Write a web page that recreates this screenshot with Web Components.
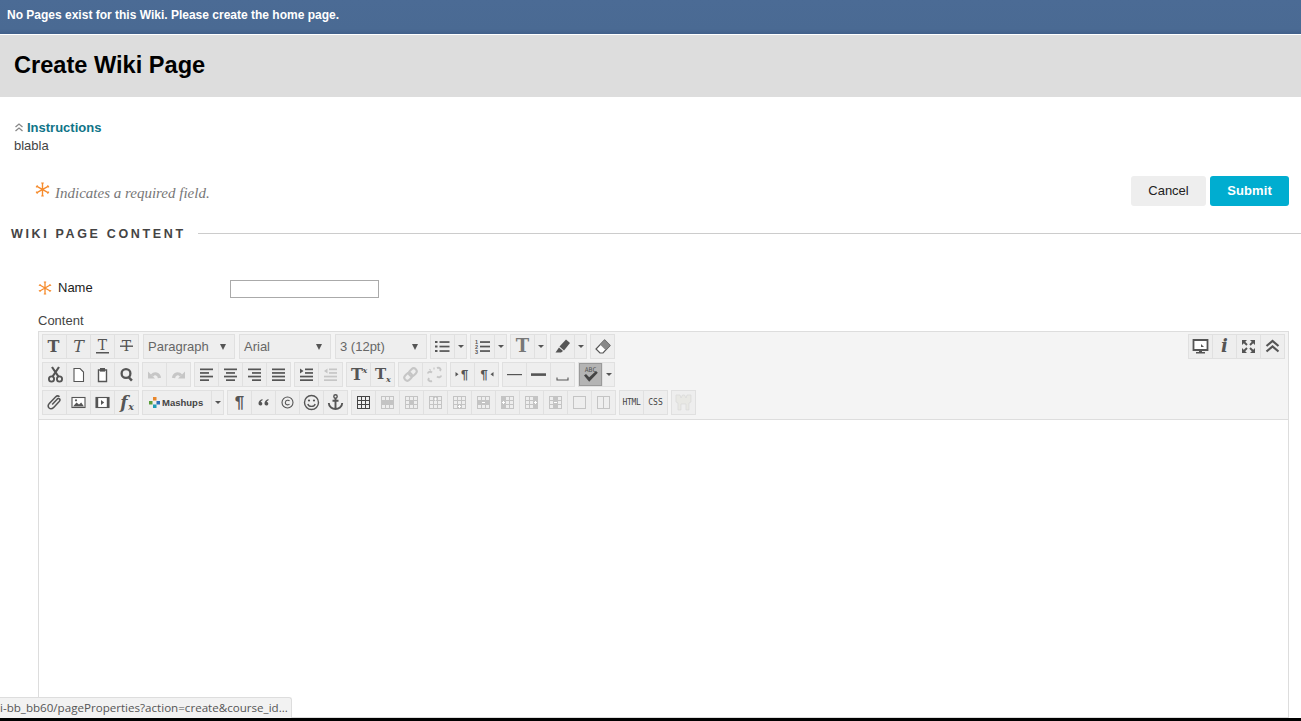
<!DOCTYPE html>
<html lang="en"><head><meta charset="utf-8"><title>Create Wiki Page</title>
<style>html,body{margin:0;padding:0;height:721px;overflow:hidden;background:#fff;font-family:"Liberation Sans",Arial,sans-serif}wiki-app{height:721px}</style>
</head><body>
<wiki-app></wiki-app>
<script>
const C='#555';
const B='#e0e0e0';
const svg=(b,extra='')=>`<svg width="23" height="23" viewBox="0 0 23 23" ${extra}>${b}</svg>`;
const txt=(t,o={})=>`<text x="${o.x??11.5}" y="${o.y??17}" text-anchor="${o.a||'middle'}" font-family="${o.f||'DejaVu Serif'}" font-size="${o.s||15}" font-weight="${o.w||'bold'}" font-style="${o.i||'normal'}" fill="${o.c||C}">${t}</text>`;
const bars=(rows,c=C)=>rows.map(([x,y,w,h])=>`<rect x="${x}" y="${y}" width="${w}" height="${h||1.6}" fill="${c}"/>`).join('');
const grid=(fills,c='#c4c4c4',sym='')=>{let s=`<rect x="5.5" y="5.5" width="12" height="12" fill="none" stroke="${c}"/>`;
 s+=`<path d="M9.5 5.5v12M13.5 5.5v12M5.5 9.5h12M5.5 13.5h12" stroke="${c}" fill="none"/>`;
 fills.forEach(([x,y,w,h])=>s+=`<rect x="${5.5+x*4}" y="${5.5+y*4}" width="${w*4}" height="${h*4}" fill="${c}"/>`);
 return svg(s+sym);};
const G='#c6c6c6';
const ICONS={
 bold:svg(txt('T',{s:16,x:10.5})),
 italic:svg(txt('T',{s:16,i:'italic',w:'normal'})),
 under:svg(txt('T',{s:14,y:15,w:'normal'})+bars([[5,17,13,1.5]])),
 strike:svg(txt('T',{s:14,y:16,w:'normal'})+bars([[5,10.5,13,1.4]])),
 cut:svg(`<g transform="translate(1 0)"><circle cx="7.5" cy="16" r="2.6" fill="none" stroke="${C}" stroke-width="1.8"/><circle cx="15.5" cy="16" r="2.6" fill="none" stroke="${C}" stroke-width="1.8"/><path d="M8.6 13.5 15 4M14.4 13.5 8 4" stroke="${C}" stroke-width="2.2"/></g>`),
 page:svg(`<path d="M7 5.5h6l3.5 3.5v9.5H7z" fill="#fff" stroke="${C}" stroke-width="1.1"/>`),
 paste:svg(`<path d="M7.5 7h8v11.5h-8z" fill="#fff" stroke="${C}" stroke-width="1.4"/><rect x="9" y="5" width="5" height="3.6" fill="${C}"/>`),
 find:svg(`<circle cx="11" cy="10.5" r="4.4" fill="none" stroke="${C}" stroke-width="2.3"/><path d="M13.5 14l3.4 3.6" stroke="${C}" stroke-width="2.5"/>`),
 undo:svg(`<path d="M9 12.500c2.500-3 7-2 7.500 2.500" fill="none" stroke="${G}" stroke-width="3.200"/><path d="M5 8.500v7h7z" fill="${G}"/>`),
 redo:svg(`<path d="M14 12.500c-2.500-3-7-2-7.500 2.500" fill="none" stroke="${G}" stroke-width="3.200"/><path d="M18 8.500v7h-7z" fill="${G}"/>`),
 al:svg(bars([[5,5.500,13,1.7],[5,9.100,9,1.700],[5,12.700,13,1.700],[5,16.300,9,1.700]])),
 ac:svg(bars([[5,5.500,13,1.7],[7,9.100,9,1.700],[5,12.700,13,1.700],[7,16.300,9,1.700]])),
 ar:svg(bars([[5,5.500,13,1.7],[9,9.100,9,1.700],[5,12.700,13,1.700],[9,16.300,9,1.700]])),
 aj:svg(bars([[5,5.500,13,1.7],[5,9.100,13,1.700],[5,12.700,13,1.700],[5,16.300,13,1.700]])),
 indent:svg(`<path d="M5 5.500l3.500 2.500L5 10.500z" fill="${C}"/>`+bars([[10,5.500,8,1.7],[10,9.100,8,1.700],[5,12.700,13,1.700],[5,16.300,13,1.700]])),
 outdent:svg(`<path d="M8.500 5.500L5 8l3.500 2.500z" fill="${G}"/>`+bars([[10,5.500,8,1.7],[10,9.100,8,1.700],[5,12.700,13,1.700],[5,16.300,13,1.700]],G)),
 sup:svg(txt('T',{x:10,s:16})+txt('x',{x:18,y:10,s:8,i:'italic'})),
 sub:svg(txt('T',{x:9.500,y:16,s:15})+txt('x',{x:17.500,y:19,s:8,i:'italic'})),
 link:svg(`<g transform="rotate(-45 11.500 11.500)" fill="none" stroke="${G}" stroke-width="2"><rect x="4" y="8.500" width="8.500" height="6" rx="3"/><rect x="10.500" y="8.500" width="8.500" height="6" rx="3"/></g>`),
 unlink:svg(`<path d="M6 15c-1.500 2 .5 4 3 3M17 8c1.500-2-.5-4-3-3M14 13.500c2 1.500 4 .5 4-1M9 9.500c-2-1.500-4-.5-4 1" fill="none" stroke="${G}" stroke-width="2"/><path d="M11 4.500v2M6.500 6l1.200 1.500" stroke="${G}" stroke-width="1.200"/>`),
 ltr:svg(`<path d="M4.500 9l3 2.200-3 2.200z" fill="${C}"/>`+txt('¶',{x:13.500,y:16,s:13,f:'Liberation Sans'})),
 rtl:svg(txt('¶',{x:9,y:16,s:13,f:'Liberation Sans'})+`<path d="M18.500 9l-3 2.200 3 2.200z" fill="${C}"/>`),
 hr:svg(bars([[4,11,15,1.2]])),
 hrb:svg(bars([[4,10.300,15,2.600]])),
 nbsp:svg(`<path d="M6 14.500v2.500h11v-2.500" fill="none" stroke="${C}" stroke-width="1.100"/>`),
 spell:svg(txt('ABC',{y:8.500,s:6.500,f:'DejaVu Sans Mono',w:'normal',c:'#555'})+`<path d="M5 12.500l2-1.500 3.200 3.300L17 8l1.800 1.800-8.600 9z" fill="#444"/>`),
 attach:svg(`<path d="M16.500 5.800c-1.200-1.200-2.800-1-4 .2l-6 6.300c-1.600 1.700-1.500 3.600-.4 4.700 1.200 1.100 3 1 4.600-.6l5.500-5.800c.9-1 1-2 .3-2.700s-1.700-.5-2.600.5l-4.700 5" fill="none" stroke="${C}" stroke-width="1.500"/>`),
 image:svg(`<rect x="5" y="6.500" width="13" height="10" fill="#fff" stroke="${C}" stroke-width="1.100"/><path d="M6 15.500l3.500-4 2.500 2 2.200-2 2.800 4z" fill="${C}"/><circle cx="9" cy="9.300" r="1.100" fill="${C}"/>`),
 video:svg(`<rect x="5" y="6.500" width="13" height="10" fill="#fff" stroke="${C}" stroke-width="1.100"/><path d="M5 6.500h2.200v10H5zM15.800 6.500H18v10h-2.200z" fill="${C}"/><path d="M10 9l3.200 2.500L10 14z" fill="${C}"/>`),
 fx:svg(txt('f',{x:9,y:16.500,s:17,i:'italic'})+txt('x',{x:16,y:19,s:9.500,i:'italic'})),
 para:svg(txt('¶',{y:17,s:17,f:'Liberation Sans'})),
 quote:svg(`<path d="M10.500 8c-2.500.8-4 2.300-4 4.500 0 1.200.8 2 1.900 2s1.900-.8 1.900-1.800-.7-1.700-1.600-1.700c.2-.7.8-1.300 1.800-1.700zM16.500 8c-2.500.8-4 2.300-4 4.500 0 1.200.8 2 1.900 2s1.900-.8 1.900-1.800-.7-1.700-1.600-1.700c.2-.7.8-1.300 1.800-1.700z" fill="${C}"/>`),
 copy:svg(`<circle cx="11.500" cy="11.500" r="5.500" fill="none" stroke="${C}" stroke-width="1.100"/><path d="M13.500 10c-.6-1-3.800-1.300-4.200 1.500-.3 2.500 3 3 4.200 1.500" fill="none" stroke="${C}" stroke-width="1.100"/>`),
 smile:svg(`<circle cx="11.500" cy="11.500" r="7" fill="none" stroke="${C}" stroke-width="1.400"/><circle cx="9" cy="9.500" r="1.100" fill="${C}"/><circle cx="14" cy="9.500" r="1.100" fill="${C}"/><path d="M7.800 13c1 3.200 6.400 3.200 7.400 0" fill="none" stroke="${C}" stroke-width="1.300"/>`),
 anchor:svg(`<circle cx="11.500" cy="5.500" r="1.700" fill="none" stroke="${C}" stroke-width="1.400"/><path d="M11.500 7V18M8.500 9.800h6M4.800 12c0 3.800 3.700 6 6.700 6s6.700-2.200 6.700-6" fill="none" stroke="${C}" stroke-width="1.900"/>`),
 table:grid([], '#444'),
 t1:grid([[0,1,3,1]]),
 t2:grid([[1,1,1,1]]),
 t3:grid([[1,0,1,1]],'#c4c4c4','<path d="M11.500 6.500v3M10 8h3" stroke="#fff"/>'),
 t4:grid([[1,2,1,1]],'#c4c4c4','<path d="M11.500 14v3M10 15.500h3" stroke="#fff"/>'),
 t5:grid([[0,1,3,1]],'#c4c4c4','<path d="M10 11.500h3" stroke="#fff"/>'),
 t6:grid([[0,0,1,3]],'#c4c4c4','<path d="M7.500 10v3M6 11.500h3" stroke="#fff"/>'),
 t7:grid([[2,0,1,3]],'#c4c4c4','<path d="M15.500 10v3M14 11.500h3" stroke="#fff"/>'),
 t8:grid([[1,0,1,3]],'#c4c4c4','<path d="M10 11.500h3" stroke="#fff"/>'),
 t9:svg(`<rect x="5.500" y="5.500" width="12" height="12" fill="none" stroke="#c4c4c4"/>`),
 t10:svg(`<rect x="5.500" y="5.500" width="12" height="12" fill="none" stroke="#c4c4c4"/><path d="M11.500 5.500v12" stroke="#c4c4c4"/>`),
 html:`<span style="font:8px 'DejaVu Sans Mono',monospace;color:#444;letter-spacing:-.3px">HTML</span>`,
 css:`<span style="font:8px 'DejaVu Sans Mono',monospace;color:#444">CSS</span>`,
 blocks:svg(`<path d="M4 4h4l1 3 1.500-3h2L14 7l1-3h4v7l-2 1v7h-3v-6h-5v6H6v-7l-2-1z" fill="#e8e8e4" stroke="#d8d8d8" stroke-width=".7"/>`),
 monitor:svg(`<path d="M4.500 5h14v10h-14z" fill="#fff" stroke="${C}" stroke-width="1.800"/><path d="M10 15h3v2h3v1.500H7V17h3z" fill="${C}"/><path d="M12 9l3 3h-3z" fill="${C}"/>`),
 info:svg(txt('i',{s:18,i:'italic'})),
 expand:svg(`<path d="M5 5h5l-5 5zM18 5v5l-5-5zM5 18v-5l5 5zM18 18h-5l5-5z" fill="${C}"/><path d="M6.500 6.500l3.500 3.500M16.500 6.500L13 10M6.500 16.500L10 13M16.500 16.500L13 13" stroke="${C}" stroke-width="1.900"/>`),
 collapse:svg(`<path d="M5.500 11l6-5 6 5M5.500 16.500l6-5 6 5" fill="none" stroke="${C}" stroke-width="2.200"/>`),
 ul:svg(bars([[4,6,2.500,2],[4,10.500,2.500,2],[4,15,2.500,2],[8.500,6.200,10,1.700],[8.500,10.700,10,1.700],[8.500,15.200,10,1.700]])),
 ol:svg(`<text x="5.500" y="9" text-anchor="middle" font-family="Liberation Sans" font-size="5.500" font-weight="bold" fill="${C}">1</text><text x="5.500" y="14" text-anchor="middle" font-family="Liberation Sans" font-size="5.500" font-weight="bold" fill="${C}">2</text><text x="5.500" y="19" text-anchor="middle" font-family="Liberation Sans" font-size="5.500" font-weight="bold" fill="${C}">3</text>`+bars([[9,6.200,10,1.700],[9,10.700,10,1.700],[9,15.200,10,1.700]])),
 fontT:svg(txt('T',{s:18,c:'#777'})),
 pen:svg(`<path d="M15 4.500l4 3.500-6 7.500-4.500-4z" fill="${C}"/><path d="M8 12.500l4 3.500-2 1.500H4.500z" fill="${C}"/>`),
 eraser:svg(`<path d="M13.500 5l5.500 5.500-7 7.500H9l-4-4z" fill="#fff" stroke="${C}" stroke-width="1.200"/><path d="M13.500 5l5.500 5.500-4.500 4.500L9 9.500z" fill="#888"/>`),
};

class TbBtn extends HTMLElement{connectedCallback(){
 const r=this.shadowRoot||this.attachShadow({mode:'open'});
 const on=this.hasAttribute('active');
 r.innerHTML=`<style>:host{display:flex;align-items:center;justify-content:center;width:23px;height:23px;border-right:1px solid ${B};${on?'background:#b4b4b4;box-shadow:inset 0 0 0 1px #999;':''}}svg{display:block}</style>${ICONS[this.getAttribute('icon')]||''}`;
}}
customElements.define('tb-btn',TbBtn);

class TbArrow extends HTMLElement{connectedCallback(){
 this.attachShadow({mode:'open'}).innerHTML=`<style>:host{display:flex;align-items:center;justify-content:center;width:11px;height:23px;border-right:1px solid ${B}}i{width:0;height:0;border:3px solid transparent;border-top:3px solid #555;border-bottom:0}</style><i></i>`;
}}
customElements.define('tb-arrow',TbArrow);

class TbGroup extends HTMLElement{constructor(){super();
 this.attachShadow({mode:'open'}).innerHTML=`<style>:host{display:flex;height:23px;background:#eee;border:1px solid ${B};border-right:0}</style><slot></slot>`;
}}
customElements.define('tb-group',TbGroup);

class TbSelect extends HTMLElement{constructor(){super();
 this.attachShadow({mode:'open'}).innerHTML=`<style>:host{display:flex;align-items:center;justify-content:space-between;box-sizing:border-box;width:92px;height:25px;background:#eee;border:1px solid ${B};padding:0 8px 0 4px;font:13px "Liberation Sans",Arial,sans-serif;color:#666;margin-left:1px}i{width:0;height:0;border:3px solid transparent;border-top:6px solid #555;border-bottom:0}</style><slot></slot><i></i>`;
}}
customElements.define('tb-select',TbSelect);

class TbMashups extends HTMLElement{constructor(){super();
 this.attachShadow({mode:'open'}).innerHTML=`<style>:host{display:flex;align-items:center;box-sizing:border-box;width:69px;height:23px;border-right:1px solid ${B};padding-left:6px;gap:2px;font:bold 9.500px "Liberation Sans",Arial,sans-serif;color:#444}svg{flex:none}</style>
 <svg width="11" height="11" viewBox="0 0 11 11"><rect x="4" y="0" width="3.500" height="3.500" fill="#e8862a"/><rect x="0" y="4" width="3.500" height="3.500" fill="#5a9e3a"/><rect x="7.500" y="4" width="3.500" height="3.500" fill="#2a6fb8"/><rect x="4" y="7.500" width="3.500" height="3.500" fill="#1c9bb5"/></svg><slot></slot>`;
}}
customElements.define('tb-mashups',TbMashups);

class WikiToolbar extends HTMLElement{constructor(){super();
 const g=(l)=>`<tb-group>${l.split(' ').map(x=>x==='>'?'<tb-arrow></tb-arrow>':`<tb-btn icon="${x}"></tb-btn>`).join('')}</tb-group>`;
 this.attachShadow({mode:'open'}).innerHTML=`<style>
 :host{display:flex;justify-content:space-between;box-sizing:border-box;height:89px;background:#f4f4f4;border:1px solid #ddd;padding:2px 3px 0 3px}
 .rows{display:flex;flex-direction:column;gap:3px}
 .row{display:flex;gap:3px}
 </style>
 <div class="rows">
  <div class="row">${g('bold italic under strike')}
   <tb-select>Paragraph</tb-select><tb-select>Arial</tb-select><tb-select>3 (12pt)</tb-select>
   ${g('ul >')}${g('ol >')}${g('fontT >')}${g('pen >')}${g('eraser')}</div>
  <div class="row">${g('cut page paste find')}${g('undo redo')}${g('al ac ar aj')}${g('indent outdent')}${g('sup sub')}${g('link unlink')}${g('ltr rtl')}${g('hr hrb nbsp')}
   <tb-group><tb-btn icon="spell" active></tb-btn><tb-arrow></tb-arrow></tb-group></div>
  <div class="row">${g('attach image video fx')}<tb-group><tb-mashups>Mashups</tb-mashups><tb-arrow></tb-arrow></tb-group>${g('para quote copy smile anchor')}${g('table t1 t2 t3 t4 t5 t6 t7 t8 t9 t10')}${g('html css')}${g('blocks')}</div>
 </div>
 <div>${g('monitor info expand collapse')}</div>`;
}}
customElements.define('wiki-toolbar',WikiToolbar);

const STAR=(s)=>`<svg width="${s}" height="${s}" viewBox="0 0 14 14" style="display:block"><path d="M7 1v12M1.800 4l10.400 6M1.800 10l10.400-6" stroke="#f68b2c" stroke-width="1.300" fill="none"/><path d="M5.800 1h2.400M5.800 13h2.400M1 5l1.300-2M11.700 11l1.300-2M1 9l1.300 2M11.700 3l1.300 2" stroke="#f68b2c" stroke-width="1" fill="none"/></svg>`;

class WikiApp extends HTMLElement{constructor(){super();
 this.attachShadow({mode:'open'}).innerHTML=`<style>
 :host{display:flex;flex-direction:column;position:relative;font:13px "Liberation Sans",Arial,sans-serif;color:#333;overflow:hidden}
 .main{flex:1;min-height:0;overflow:hidden;display:flex;flex-direction:column}
 .notice{height:34px;box-sizing:border-box;background:linear-gradient(#4b6b95 0,#4a6a93 85%,#41608a 100%);color:#fff;font-weight:bold;font-size:12px;padding:8px 0 0 7px;flex:none}
 .banner{margin-top:1px;height:62px;flex:none;background:#ddd;display:flex;align-items:center;padding-left:14px;padding-bottom:2px;box-sizing:border-box}
 h1{margin:0;font-size:23.600px;font-weight:bold;color:#000}
 .instr{padding:22px 14px 0;line-height:17px;flex:none;color:#444}
 .instr b{color:#0f7488;display:flex;align-items:center;gap:3px;height:16px;padding-bottom:2px}
 .req{display:flex;justify-content:space-between;align-items:flex-start;padding:23px 12px 0 35px;height:30px;flex:none}
 .req .l{display:flex;gap:5px;align-items:flex-start;margin-top:5px}
 .req em{font:italic 15px "Liberation Serif",serif;color:#777;margin-top:3px}
 .btns{display:flex;gap:4px;margin-top:-1px}
 .btn{height:30px;box-sizing:border-box;border-radius:3px;display:flex;align-items:center;justify-content:center;padding-bottom:2px}
 .cancel{width:75px;background:#eee;color:#222;font-size:13px}
 .submit{width:79px;background:#00add0;color:#fff;font-weight:bold;font-size:13px;letter-spacing:.1px}
 .sec{display:flex;align-items:center;margin-top:18px;padding-left:11px;gap:12px;flex:none;height:16px}
 .sec h2{margin:2px 0 0;font-size:12.500px;font-weight:bold;letter-spacing:2.650px;color:#444;white-space:nowrap}
 .sec i{flex:1;height:1px;background:#ccc}
 .name{display:flex;padding:40px 0 0 38px;flex:none;height:29px;align-items:flex-start}
 .name .s{width:20px;margin-top:0}
 .name span{width:172px;color:#222;margin-top:-1px}
 input{width:149px;height:18px;box-sizing:border-box;border:1px solid #aaa;padding:0;margin:-1px 0 0;background:#fff;display:block}
 .content{padding:3px 0 0 38px;flex:none;line-height:15px;color:#444}
 .ed{margin:3px 12px 0 38px;flex:1;display:flex;flex-direction:column;min-height:0}
 .area{flex:1;border:1px solid #ddd;border-top:0}
 .taskbar{height:3px;background:#000;flex:none}
 .tip{position:absolute;left:0;bottom:3px;width:292px;height:21px;box-sizing:border-box;background:#f2f2f2;border:1px solid #ddd;border-left:0;border-bottom:0;border-radius:0 3px 0 0;font:11.600px "Open Sans",sans-serif;color:#555;line-height:19px;white-space:nowrap;overflow:hidden}
 </style>
 <div class="main">
  <div class="notice">No Pages exist for this Wiki. Please create the home page.</div>
  <div class="banner"><h1>Create Wiki Page</h1></div>
  <div class="instr"><b><svg width="10" height="10" viewBox="0 0 10 10"><path d="M1.500 5l3.500-3 3.500 3M1.500 9l3.500-3 3.500 3" stroke="#888" fill="none" stroke-width="1.300"/></svg>Instructions</b><div>blabla</div></div>
  <div class="req"><div class="l">${STAR(15)}<em>Indicates a required field.</em></div>
   <div class="btns"><div class="btn cancel">Cancel</div><div class="btn submit">Submit</div></div></div>
  <div class="sec"><h2>WIKI PAGE CONTENT</h2><i></i></div>
  <div class="name"><div class="s">${STAR(14)}</div><span>Name</span><input type="text" aria-label="Name"></div>
  <div class="content">Content</div>
  <div class="ed"><wiki-toolbar></wiki-toolbar><div class="area"></div></div>
 </div>
 <div class="taskbar"></div>
 <div class="tip">i-bb_bb60/pageProperties?action=create&amp;course_id...</div>`;
}}
customElements.define('wiki-app',WikiApp);
</script>
</body></html>
